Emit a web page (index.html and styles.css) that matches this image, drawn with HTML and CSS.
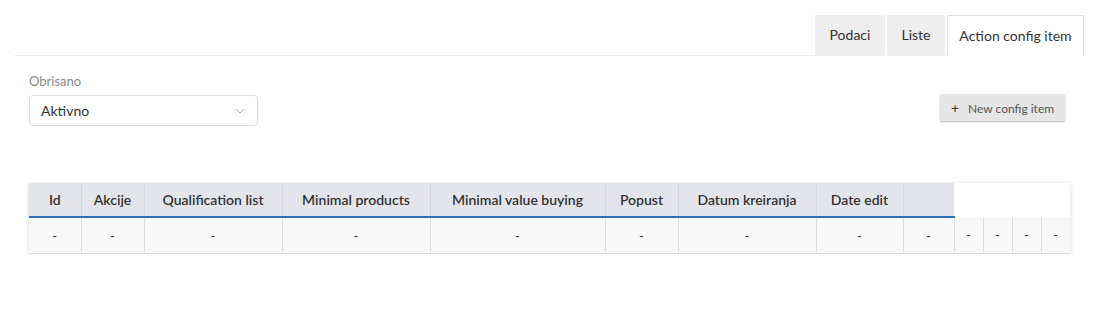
FILE: index.html
```
<!DOCTYPE html>
<html lang="hr">
<head>
    <meta charset="UTF-8">
    <meta name="viewport" content="width=device-width, initial-scale=1.0">
    <title>Action config item</title>
    <link rel="stylesheet" href="styles.css">
</head>
<body>
    <div id="page">
        <!-- Tabovi -->
        <ul class="tabs">
            <li class="tab">Podaci</li>
            <li class="tab">Liste</li>
            <li class="tab active">Action config item</li>
        </ul>

        <!-- Filter -->
        <div class="toolbar">
            <div class="field">
                <label class="field-label">Obrisano</label>
                <div class="select">
                    <span>Aktivno</span>
                    <svg width="10" height="6" viewBox="0 0 10 6"><path d="M1 1l4 4 4-4" fill="none" stroke="#aaa" stroke-width="1"/></svg>
                </div>
            </div>
            <button class="btn-new"><span class="plus">+</span>New config item</button>
        </div>

        <!-- Tablica -->
        <div class="table-wrap">
            <table class="grid">
                <colgroup>
                    <col style="width:52px"><col style="width:63px"><col style="width:138px">
                    <col style="width:148px"><col style="width:175px"><col style="width:73px">
                    <col style="width:138px"><col style="width:87px"><col style="width:51px">
                    <col style="width:29px"><col style="width:29px"><col style="width:29px"><col style="width:29px">
                </colgroup>
                <thead>
                    <tr>
                        <th>Id</th>
                        <th>Akcije</th>
                        <th>Qualification list</th>
                        <th>Minimal products</th>
                        <th>Minimal value buying</th>
                        <th>Popust</th>
                        <th>Datum kreiranja</th>
                        <th>Date edit</th>
                        <th></th>
                    </tr>
                </thead>
                <tbody>
                    <tr>
                        <td>-</td><td>-</td><td>-</td><td>-</td><td>-</td><td>-</td><td>-</td>
                        <td>-</td><td>-</td><td>-</td><td>-</td><td>-</td><td>-</td>
                    </tr>
                </tbody>
            </table>
        </div>
    </div>
</body>
</html>
```
FILE: styles.css
```
/* Opći stil */
body {
    font-family: Lato, "Open Sans", Arial, sans-serif;
    background-color: #fff;
    color: #333;
    margin: 0;
}
#page {
    width: 1070px;
    margin-left: 14px;
}

/* Tabovi */
.tabs {
    list-style: none;
    margin: 15px 0 0 0;
    padding: 0;
    display: flex;
    justify-content: flex-end;
    gap: 2px;
    border-bottom: 1px solid #eee;
}
.tab {
    height: 40px;
    line-height: 40px;
    box-sizing: border-box;
    text-align: center;
    white-space: nowrap;
    font-size: 14px;
    background-color: #eee;
    color: #333;
    margin-bottom: -1px;
}
.tab:nth-child(1) {
    width: 70px;
}
.tab:nth-child(2) {
    width: 58px;
}
.tab.active {
    width: 137px;
    height: 41px;
    line-height: 39px;
    background-color: #fff;
    border: 1px solid #ddd;
    border-bottom-color: #fff;
}

/* Filter */
.toolbar {
    display: flex;
    justify-content: space-between;
    align-items: flex-end;
    padding: 0 19px 0 15px;
    margin-top: 17px;
}
.field-label {
    display: block;
    font-size: 13px;
    color: #8a8a8a;
    margin-bottom: 6px;
}
.select {
    width: 229px;
    height: 31px;
    box-sizing: border-box;
    border: 1px solid #ddd;
    border-radius: 4px;
    padding: 0 12px 0 11px;
    display: flex;
    align-items: center;
    justify-content: space-between;
    font-size: 14px;
    color: #333;
}
.btn-new {
    width: 125px;
    height: 27px;
    margin-bottom: 5px;
    border: none;
    border-radius: 2px;
    background-color: #e6e6e6;
    box-shadow: 0 1px 2px rgba(0, 0, 0, 0.3);
    font-family: inherit;
    font-size: 12px;
    color: #555;
    cursor: pointer;
    padding: 0;
    white-space: nowrap;
}
.plus {
    font-size: 14px;
    color: #333;
    margin-right: 9px;
}

/* Tablica */
.table-wrap {
    margin: 57px 0 0 15px;
    width: 1041px;
    box-shadow: 0 1px 4px rgba(0, 0, 0, 0.18);
}
.grid {
    width: 1041px;
    table-layout: fixed;
    border-collapse: collapse;
    background-color: #fff;
}
.grid th {
    height: 33px;
    background-color: #e4e5ea;
    border-left: 1px solid #d6d7dc;
    border-bottom: 2px solid #2f6eb5;
    font-size: 14px;
    font-weight: 600;
    color: #333;
    padding: 0;
}
.grid th:first-child {
    border-left: none;
}
.grid td {
    height: 35px;
    background-color: #f8f8f8;
    border: 1px solid #ddd;
    border-top: none;
    text-align: center;
    font-size: 13px;
    color: #333;
    padding: 0;
}
.grid td:first-child {
    border-left: none;
}
.grid td:last-child {
    border-right: none;
}
```
